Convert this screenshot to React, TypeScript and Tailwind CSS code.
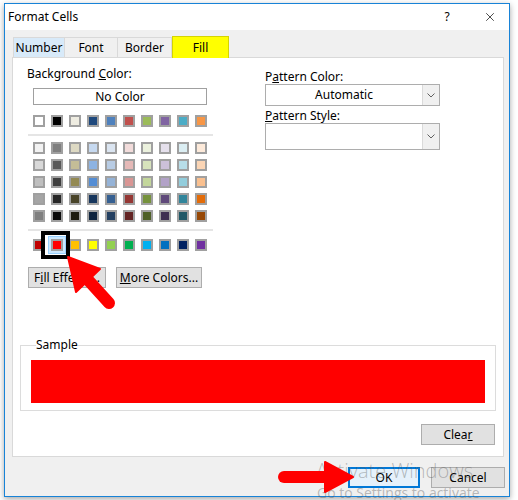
import { X } from 'lucide-react';

const topRow = [
  'bg-[#ffffff]', 'bg-[#000000]', 'bg-[#eeece1]', 'bg-[#1f497d]', 'bg-[#4f81bd]',
  'bg-[#c0504d]', 'bg-[#9bbb59]', 'bg-[#8064a2]', 'bg-[#4bacc6]', 'bg-[#f79646]',
];

const themeRows = [
  ['bg-[#f2f2f2]', 'bg-[#7f7f7f]', 'bg-[#ddd9c3]', 'bg-[#c6d9f0]', 'bg-[#dbe5f1]', 'bg-[#f2dcdb]', 'bg-[#ebf1dd]', 'bg-[#e5e0ec]', 'bg-[#dbeef3]', 'bg-[#fdeada]'],
  ['bg-[#d8d8d8]', 'bg-[#595959]', 'bg-[#c4bd97]', 'bg-[#8db3e2]', 'bg-[#b8cce4]', 'bg-[#e5b9b7]', 'bg-[#d7e3bc]', 'bg-[#ccc1d9]', 'bg-[#b7dde8]', 'bg-[#fbd5b5]'],
  ['bg-[#bfbfbf]', 'bg-[#3f3f3f]', 'bg-[#938953]', 'bg-[#548dd4]', 'bg-[#95b3d7]', 'bg-[#d99694]', 'bg-[#c3d69b]', 'bg-[#b2a2c7]', 'bg-[#92cddc]', 'bg-[#fac08f]'],
  ['bg-[#a5a5a5]', 'bg-[#262626]', 'bg-[#494429]', 'bg-[#17365d]', 'bg-[#366092]', 'bg-[#953734]', 'bg-[#76923c]', 'bg-[#5f497a]', 'bg-[#31859b]', 'bg-[#e36c09]'],
  ['bg-[#7f7f7f]', 'bg-[#0c0c0c]', 'bg-[#1d1b10]', 'bg-[#0f243e]', 'bg-[#244061]', 'bg-[#632423]', 'bg-[#4f6128]', 'bg-[#3f3151]', 'bg-[#205867]', 'bg-[#974806]'],
];

const standardRow = [
  'bg-[#c00000]', 'bg-[#ff0000]', 'bg-[#ffc000]', 'bg-[#ffff00]', 'bg-[#92d050]',
  'bg-[#00b050]', 'bg-[#00b0f0]', 'bg-[#0070c0]', 'bg-[#002060]', 'bg-[#7030a0]',
];

function Swatch({ color, selected = false }: { color: string; selected?: boolean }) {
  return (
    <div className="relative w-[12px] h-[12px]">
      {selected && (
        <div className="absolute -inset-[3px] bg-[#cce8ff] border border-[#99d1ff]" />
      )}
      <div className={`relative w-[12px] h-[12px] border-2 border-[#a0a0a0] ${color}`} />
    </div>
  );
}

function SwatchRow({ colors, selectedIndex = -1 }: { colors: string[]; selectedIndex?: number }) {
  return (
    <div className="flex gap-[6px]">
      {colors.map((c, i) => (
        <Swatch key={i} color={c} selected={i === selectedIndex} />
      ))}
    </div>
  );
}

function Chevron() {
  return (
    <svg width="8" height="5" viewBox="0 0 8 5">
      <path d="M0.5 0.5 L4 4 L7.5 0.5" fill="none" stroke="#606060" strokeWidth="1" />
    </svg>
  );
}

function Dropdown({ value, height }: { value: string; height: string }) {
  return (
    <div className={`flex w-[175px] ${height} border border-[#adadad] bg-white`}>
      <div className="flex-1 flex items-center justify-center">{value}</div>
      <div className="w-[17px] flex items-center justify-center border-l border-[#dadada] bg-[#f0f0f0]">
        <Chevron />
      </div>
    </div>
  );
}

function WinButton({ children, className = '' }: { children: React.ReactNode; className?: string }) {
  return (
    <div className={`h-[21px] flex items-center justify-center bg-[#e1e1e1] border border-[#adadad] ${className}`}>
      {children}
    </div>
  );
}

export default function App() {
  return (
    <div className="relative w-[518px] h-[500px] bg-white overflow-hidden font-['Noto_Sans',sans-serif] text-[12px] leading-[16px] text-black">
      {/* Dialog window */}
      <div className="ml-[4px] mt-[3px] w-[506px] h-[494px] border border-[#1883d7] flex flex-col shadow-[0_2px_6px_rgba(0,0,0,0.35)]">
        {/* Title bar */}
        <div className="h-[26px] bg-white flex items-center pl-[3px]">
          <span className="flex-1">Format Cells</span>
          <span className="w-[12px] text-center mr-[30px]">?</span>
          <X className="w-[14px] h-[14px] mr-[12px]" strokeWidth={1.2} />
        </div>

        <div className="flex-1 bg-[#f0f0f0] flex flex-col pl-[7px]">
          {/* Tabs */}
          <div className="flex items-end pt-[5px] pl-[1px] h-[27px]">
            <div className="w-[52px] h-[20px] flex items-center justify-center bg-[#d8eaf9] border border-b-0 border-[#d9d9d9]">Number</div>
            <div className="w-[53px] h-[20px] flex items-center justify-center border-t border-r border-[#d9d9d9]">Font</div>
            <div className="w-[54px] h-[20px] flex items-center justify-center border-t border-r border-[#d9d9d9]">Border</div>
            <div className="w-[57px] h-[22px] flex items-center justify-center bg-[#ffff00] border border-b-0 border-[#d4d400] relative -mb-px z-10">Fill</div>
          </div>

          {/* Panel */}
          <div className="w-[492px] h-[400px] bg-white border border-[#d9d9d9] flex flex-col">
            <div className="flex">
              {/* Background color */}
              <div className="pl-[14px] pt-[8px] w-[238px]">
                <div>Background <span className="underline">C</span>olor:</div>
                <div className="ml-[6px] mt-[6px] w-[174px] h-[17px] border border-[#a0a0a0] flex items-center justify-center">No Color</div>
                <div className="ml-[6px] mt-[10px]">
                  <SwatchRow colors={topRow} />
                </div>
                <div className="ml-[1px] mt-[7px] w-[185px] h-[2px] bg-[#e5e5e5]" />
                <div className="ml-[6px] mt-[6px] flex flex-col gap-[5px]">
                  {themeRows.map((r, i) => (
                    <SwatchRow key={i} colors={r} />
                  ))}
                </div>
                <div className="ml-[1px] mt-[7px] w-[185px] h-[2px] bg-[#e5e5e5]" />
                <div className="ml-[6px] mt-[8px]">
                  <SwatchRow colors={standardRow} selectedIndex={1} />
                </div>
                <div className="mt-[16px] ml-[1px] flex gap-[10px]">
                  <WinButton className="w-[78px]">
                    <span>F<span className="underline">i</span>ll Effects...</span>
                  </WinButton>
                  <WinButton className="w-[86px]">
                    <span><span className="underline">M</span>ore Colors...</span>
                  </WinButton>
                </div>
              </div>

              {/* Pattern */}
              <div className="pl-[14px] pt-[11px]">
                <div className="leading-[15px]">P<span className="underline">a</span>ttern Color:</div>
                <Dropdown value="Automatic" height="h-[22px]" />
                <div className="mt-[2px] leading-[15px]"><span className="underline">P</span>attern Style:</div>
                <Dropdown value="" height="h-[27px]" />
              </div>
            </div>

            {/* Sample */}
            <fieldset className="ml-[7px] mt-[49px] w-[476px] border border-[#dcdcdc] px-[10px] pb-[7px]">
              <legend className="ml-[5px]">Sample</legend>
              <div className="mt-[7px] h-[43px] bg-[#ff0000]" />
            </fieldset>

            <div className="flex justify-end mt-[13px] mr-[8px]">
              <WinButton className="w-[74px]">
                <span>Clea<span className="underline">r</span></span>
              </WinButton>
            </div>
          </div>

          {/* Bottom buttons */}
          <div className="flex justify-end gap-[11px] mt-[10px] mr-[4px]">
            <div className="w-[72px] h-[21px] flex items-center justify-center bg-[#e5f1fb] border-2 border-[#0078d7]">OK</div>
            <WinButton className="w-[74px]">Cancel</WinButton>
          </div>
        </div>
      </div>

      {/* Activate Windows watermark */}
      <div className="absolute left-[316px] top-[458px] pointer-events-none text-[rgba(90,90,90,0.4)] font-['Open_Sans',sans-serif]">
        <div className="text-[20px] leading-[26px] font-light">Activate Windows</div>
        <div className="text-[14px] leading-[18px] ml-[1px]">Go to Settings to activate Windows.</div>
      </div>

      {/* Annotations */}
      <svg className="absolute inset-0 pointer-events-none" width="518" height="500" viewBox="0 0 518 500">
        <rect x="43" y="233" width="25" height="24" fill="none" stroke="#000" strokeWidth="4" />
        <line x1="89" y1="281" x2="109" y2="303" stroke="#ff0000" strokeWidth="12" strokeLinecap="round" />
        <polygon points="68,257 100,269 76,292" fill="#ff0000" stroke="#ff0000" strokeWidth="2" strokeLinejoin="round" />
        <line x1="284" y1="477" x2="328" y2="477" stroke="#ff0000" strokeWidth="12" strokeLinecap="round" />
        <polygon points="353,477 325,462 325,492" fill="#ff0000" stroke="#ff0000" strokeWidth="2" strokeLinejoin="round" />
      </svg>
    </div>
  );
}
